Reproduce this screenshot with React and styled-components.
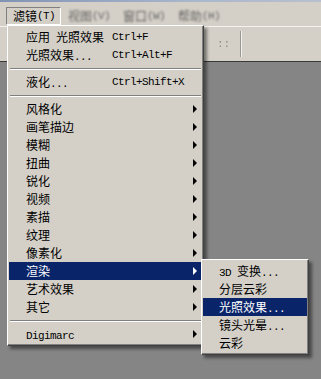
import React from "react";
import styled, { createGlobalStyle } from "styled-components";

const Global = createGlobalStyle`
  html, body { margin: 0; padding: 0; background: #868686; }
  body { font-family: "Noto Sans CJK SC", "Liberation Mono", monospace; font-size: 12px; line-height: 18px; }
`;

const Page = styled.div`
  position: relative;
  width: 321px;
  height: 379px;
  overflow: hidden;
  background: #858585;
  display: flex;
  flex-direction: column;
`;

const TitleStrip = styled.div`
  height: 2px;
  background: linear-gradient(90deg, #8193b5, #a9b6cc 60%, #b8c0cf);
`;

const MenuBar = styled.div`
  height: 24px;
  box-sizing: border-box;
  background: #d4d0c8;
  display: flex;
  align-items: flex-end;
  padding: 0 0 1px 6px;
`;

const BarItem = styled.div`
  height: 18px;
  box-sizing: border-box;
  padding: 0 5px 0 6px;
  display: flex;
  align-items: center;
  font-size: 12px;
  line-height: 16px;
  color: ${(p) => (p.$open ? "#000" : "#3c3c3c")};
  border: 1px solid ${(p) => (p.$open ? "#808080" : "transparent")};
  border-right-color: ${(p) => (p.$open ? "#fff" : "transparent")};
  border-bottom-color: ${(p) => (p.$open ? "#fff" : "transparent")};
  filter: ${(p) => (p.$open ? "none" : "blur(1px)")};
  opacity: ${(p) => (p.$open ? 1 : 0.75)};
`;

const ToolBar = styled.div`
  height: 36px;
  box-sizing: border-box;
  background: #d4d0c8;
  border-top: 1px solid #f4f3f0;
  border-bottom: 1px solid #3a3a3a;
  display: flex;
  align-items: center;
  padding-left: 217px;
  gap: 10px;
`;

const Grip = styled.div`
  font: 11px/18px "Liberation Mono", monospace;
  color: #8e8c85;
  filter: blur(0.5px);
`;

const ToolSep = styled.div`
  width: 1px;
  height: 26px;
  background: #9a978f;
  border-right: 1px solid #f2f1ee;
`;

const Workspace = styled.div`
  flex: 1;
  background: #858585;
`;

const Menu = styled.div`
  position: absolute;
  left: ${(p) => p.$x}px;
  top: ${(p) => p.$y}px;
  width: ${(p) => p.$w}px;
  box-sizing: border-box;
  background: #d4d0c8;
  border: 1px solid;
  border-color: #ffffff #404040 #404040 #ffffff;
  box-shadow: inset -1px -1px 0 #808080, inset 1px 1px 0 #d4d0c8,
    3px 3px 3px rgba(0, 0, 0, 0.45);
  padding: 2px 1px 2px 1px;
`;

const Row = styled.div`
  height: 18px;
  font-size: 12px;
  line-height: 18px;
  display: grid;
  grid-template-columns: ${(p) => p.$cols};
  align-items: center;
  padding-left: ${(p) => p.$pad}px;
  background: ${(p) => (p.$active ? "#0a246a" : "transparent")};
  color: ${(p) => (p.$active ? "#fff" : "#000")};
  white-space: nowrap;
`;

const Cjk = styled.span`
  font-family: "Noto Sans CJK SC", sans-serif;
  font-size: 12px;
`;

const Lat = styled.span`
  font-family: "Liberation Mono", monospace;
  font-size: 11px;
  letter-spacing: -0.6px;
`;

const Label = styled.span`
  display: block;
  height: 18px;
  line-height: 18px;
`;

const Shortcut = styled.span`
  font-family: "Liberation Mono", monospace;
  font-size: 11px;
  letter-spacing: -0.6px;
  line-height: 18px;
`;

const Sep = styled.div`
  height: 9px;
  display: flex;
  flex-direction: column;
  justify-content: center;
  &::before {
    content: "";
    display: block;
    margin: 0 1px;
    border-top: 1px solid #808080;
    border-bottom: 1px solid #ffffff;
  }
`;

const ArrowBox = styled.svg`
  margin-left: 7px;
  display: block;
`;

function Txt({ s }) {
  const parts = s.match(/[\x00-\x7f]+|[^\x00-\x7f]+/g) || [];
  return parts.map((p, i) =>
    /^[\x00-\x7f]/.test(p) ? <Lat key={i}>{p}</Lat> : <Cjk key={i}>{p}</Cjk>
  );
}

function Arrow({ color }) {
  return (
    <ArrowBox width="5" height="8" viewBox="0 0 5 8">
      <path d="M0 0 L4 4 L0 8 Z" fill={color} />
    </ArrowBox>
  );
}

const mainItems = [
  { t: "应用 光照效果", k: "Ctrl+F" },
  { t: "光照效果...", k: "Ctrl+Alt+F" },
  "sep",
  { t: "液化...", k: "Ctrl+Shift+X" },
  "sep",
  { t: "风格化", sub: true },
  { t: "画笔描边", sub: true },
  { t: "模糊", sub: true },
  { t: "扭曲", sub: true },
  { t: "锐化", sub: true },
  { t: "视频", sub: true },
  { t: "素描", sub: true },
  { t: "纹理", sub: true },
  { t: "像素化", sub: true },
  { t: "渲染", sub: true, active: true },
  { t: "艺术效果", sub: true },
  { t: "其它", sub: true },
  "sep",
  { t: "Digimarc", sub: true },
];

const subItems = [
  { t: "3D 变换..." },
  { t: "分层云彩" },
  { t: "光照效果...", active: true },
  { t: "镜头光晕..." },
  { t: "云彩" },
];

export default function App() {
  return (
    <>
      <Global />
      <Page>
        <TitleStrip />
        <MenuBar>
          <BarItem $open>
            <Txt s="滤镜(T)" />
          </BarItem>
          <BarItem>
            <Txt s="视图(V)" />
          </BarItem>
          <BarItem>
            <Txt s="窗口(W)" />
          </BarItem>
          <BarItem>
            <Txt s="帮助(H)" />
          </BarItem>
        </MenuBar>
        <ToolBar>
          <Grip>::</Grip>
          <ToolSep />
        </ToolBar>
        <Workspace />

        <Menu $x={7} $y={25} $w={197}>
          {mainItems.map((it, i) =>
            it === "sep" ? (
              <Sep key={i} />
            ) : (
              <Row key={i} $active={it.active} $pad={17} $cols="86px 1fr 16px">
                <Label>
                  <Txt s={it.t} />
                </Label>
                <Shortcut>{it.k || ""}</Shortcut>
                {it.sub ? <Arrow color={it.active ? "#fff" : "#000"} /> : <span />}
              </Row>
            )
          )}
        </Menu>

        <Menu $x={201} $y={259} $w={108}>
          {subItems.map((it, i) => (
            <Row key={i} $active={it.active} $pad={16} $cols="1fr">
              <Label>
                <Txt s={it.t} />
              </Label>
            </Row>
          ))}
        </Menu>
      </Page>
    </>
  );
}
